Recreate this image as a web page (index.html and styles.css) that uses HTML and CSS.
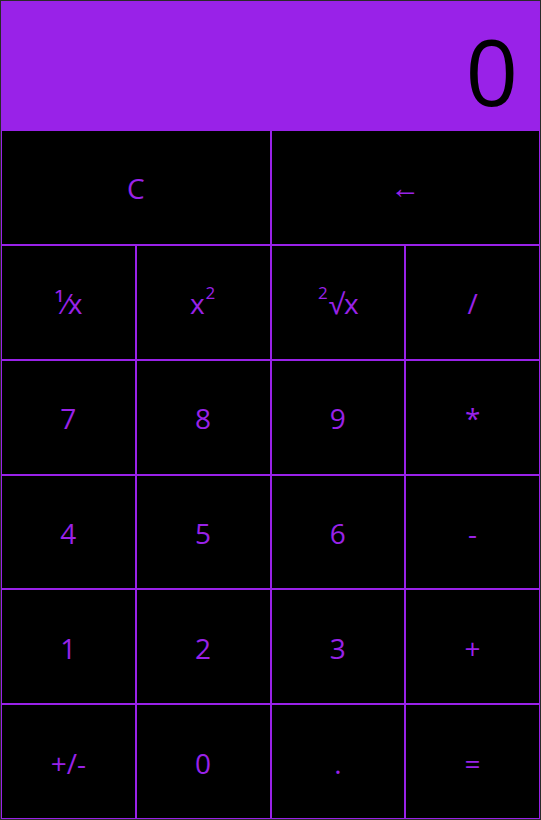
FILE: index.html
```html
<!DOCTYPE html>
<html>
<head>
<meta charset="utf-8">
<link rel="stylesheet" href="styles.css">
</head>
<body>
<div class="calc">
  <div class="display">0</div>
  <div class="keys">
    <div class="key wide">C</div>
    <div class="key wide arrow">←</div>
    <div class="key">¹⁄x</div>
    <div class="key">x<span class="sup">2</span></div>
    <div class="key"><span class="sup">2</span>√x</div>
    <div class="key">/</div>
    <div class="key">7</div>
    <div class="key">8</div>
    <div class="key">9</div>
    <div class="key">*</div>
    <div class="key">4</div>
    <div class="key">5</div>
    <div class="key">6</div>
    <div class="key">-</div>
    <div class="key">1</div>
    <div class="key">2</div>
    <div class="key">3</div>
    <div class="key">+</div>
    <div class="key">+/-</div>
    <div class="key">0</div>
    <div class="key">.</div>
    <div class="key">=</div>
  </div>
</div>
</body>
</html>
```
FILE: styles.css
```css
html, body {
  margin: 0;
  padding: 0;
  background: #000;
}
.calc {
  box-sizing: border-box;
  width: 541px;
  height: 820px;
  border: 1px solid #2a2a2a;
  display: flex;
  flex-direction: column;
  font-family: "Open Sans", "Noto Sans", sans-serif;
}
.display {
  height: 129px;
  flex: none;
  background: #9922e8;
  color: #000;
  font-size: 92px;
  line-height: 129px;
  text-align: right;
  padding: 5px 22px 0 0;
  box-sizing: border-box;
}
.keys {
  flex: 1;
  display: grid;
  grid-template-columns: repeat(4, 1fr);
  grid-template-rows: repeat(6, 1fr);
  background: #000;
}
.key {
  border: 1px solid #9922e8;
  color: #9922e8;
  font-size: 28px;
  display: flex;
  align-items: center;
  justify-content: center;
  padding-top: 2px;
}
.wide {
  grid-column: span 2;
}
.arrow {
  font-family: "Liberation Sans", sans-serif;
  font-size: 30px;
}
.sup {
  font-size: 17px;
  position: relative;
  top: -11px;
  margin: 0 1px;
}
```
